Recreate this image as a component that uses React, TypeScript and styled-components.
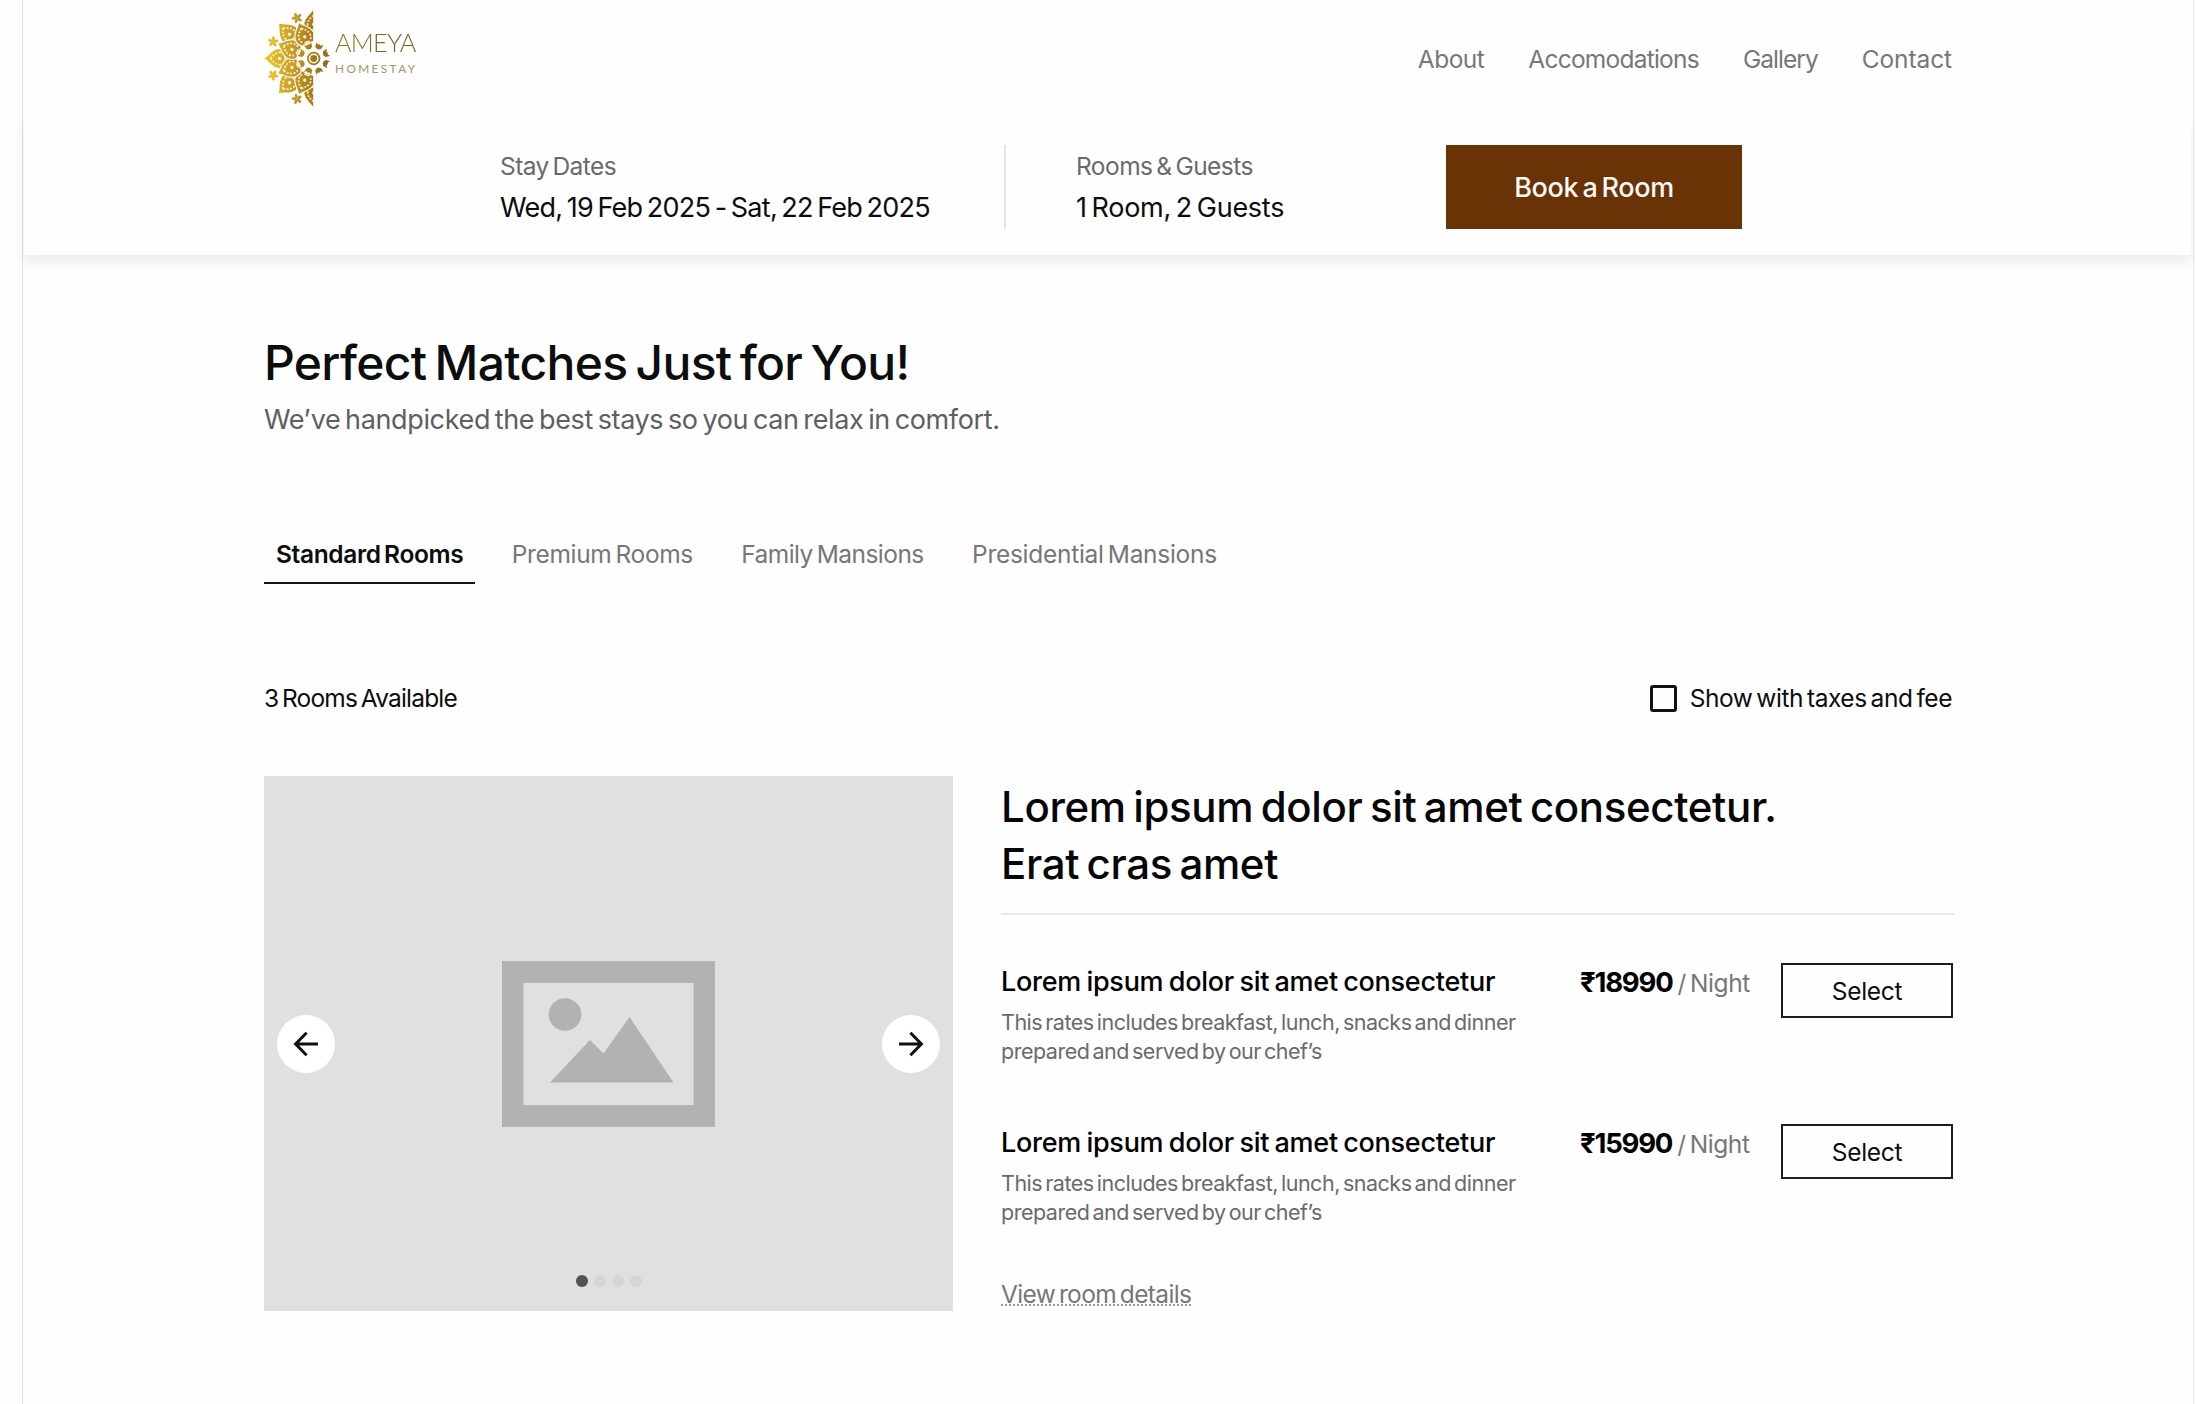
import React, { useState } from "react";
import styled, { createGlobalStyle, css } from "styled-components";

const GlobalStyle = createGlobalStyle`
  *, *::before, *::after { box-sizing: border-box; }
  html, body { margin: 0; padding: 0; background: #fefefe; }
  body { overflow: hidden; }
  button { font: inherit; color: inherit; padding: 0; border: 0; border-radius: 0; background: none; cursor: pointer; }
  h1, h2, h3, p { margin: 0; font-weight: inherit; }
`;

type Tracked = { $track?: number };

const tracking = css<Tracked>`
  letter-spacing: ${({ $track = -0.4 }) => $track}px;
  word-spacing: -2.5px;
  white-space: nowrap;
`;

const bodyText = css<Tracked>`
  font-size: 24.5px;
  line-height: 34px;
  ${tracking}
`;

const Page = styled.div`
  height: 1404px;
  padding: 0 2px 0 22px;
  overflow: hidden;
  background: #fefefe;
  color: #0c0d0d;
  font-family: Inter, "Liberation Sans", sans-serif;
`;

const Frame = styled.div`
  height: 100%;
  border: 1px solid #dfdfdf;
  border-right-color: #ebebeb;
  border-width: 0 1px;
`;

const TopBar = styled.header`
  position: relative;
  z-index: 1;
  display: flex;
  align-items: center;
  justify-content: space-between;
  height: 118px;
  padding: 0 241px;
  background: #fefefe;
`;

const Brand = styled.a`
  display: flex;
  align-items: flex-start;
  height: 118px;
`;

const BrandMark = styled.svg`
  display: block;
  width: 71px;
  height: 118px;
`;

const BrandText = styled.span`
  display: flex;
  flex-direction: column;
  padding-top: 27px;
  font-family: Lato, "Liberation Sans", sans-serif;
`;

const BrandName = styled.span`
  font-size: 25.3px;
  font-weight: 300;
  line-height: 30px;
  letter-spacing: -0.75px;
  background: linear-gradient(90deg, #8d7420, #6f5c22);
  background-clip: text;
  color: transparent;
`;

const BrandTag = styled.span`
  margin-top: 2px;
  font-size: 11.8px;
  line-height: 20px;
  letter-spacing: 2.4px;
  color: #a4965f;
`;

const Nav = styled.nav`
  display: flex;
  gap: 44px;
`;

const NavLink = styled.a<Tracked>`
  ${bodyText}
  color: #777;
`;

const BookingBar = styled.section`
  display: flex;
  height: 137px;
  margin: 0 2px 0 1px;
  padding: 27px 0 26px 476px;
  box-shadow: 0 7px 12px rgba(0, 0, 0, 0.075);
`;

const BookingField = styled.div<{ $width: number }>`
  display: flex;
  flex-direction: column;
  gap: 8px;
  width: ${({ $width }) => $width}px;
  padding-top: 4px;
`;

const FieldLabel = styled.span<Tracked>`
  ${bodyText}
  color: #6a6a6a;
`;

const FieldValue = styled.span<Tracked>`
  ${bodyText}
  font-size: 27px;
`;

const Divider = styled.span`
  width: 2px;
  margin-right: 70px;
  background: #e4e4e4;
`;

const BookButton = styled.button`
  ${tracking}
  width: 296px;
  height: 84px;
  font-size: 27px;
  font-weight: 500;
  color: #fdfaf8;
  background: #693306;
`;

const Content = styled.main`
  width: 1690px;
  margin: 78px 0 0 241px;
`;

const Heading = styled.h1`
  font-size: 48px;
  font-weight: 500;
  line-height: 60px;
  letter-spacing: -0.7px;
  word-spacing: -3.8px;
`;

const Subtitle = styled.p<Tracked>`
  ${tracking}
  margin-top: 9px;
  font-size: 27px;
  line-height: 36px;
  color: #5f5f5f;
`;

const Tabs = styled.div`
  display: flex;
  gap: 24.3px;
  margin-top: 98.5px;
`;

const Tab = styled.button<Tracked & { $active: boolean }>`
  ${bodyText}
  padding: 0 12px 11px;
  border-bottom: 2px solid ${({ $active }) => ($active ? "#161616" : "transparent")};
  font-weight: ${({ $active }) => ($active ? 600 : 400)};
  color: ${({ $active }) => ($active ? "#0c0d0d" : "#777")};
`;

const StatusRow = styled.div`
  display: flex;
  justify-content: space-between;
  margin-top: 97.5px;
  padding-right: 2px;
`;

const RoomCount = styled.span<Tracked>`
  ${bodyText}
`;

const TaxToggle = styled.label<Tracked>`
  ${bodyText}
  display: flex;
  align-items: center;
  gap: 13px;
  cursor: pointer;
`;

const CheckBox = styled.input`
  appearance: none;
  width: 27px;
  height: 27px;
  margin: 0;
  border: 3px solid #111;
  border-radius: 3px;
  &:checked { background: #111; }
`;

const RoomCard = styled.article`
  display: flex;
  gap: 48px;
  margin-top: 61px;
`;

const Gallery = styled.div`
  display: grid;
  grid-template: 1fr / 1fr;
  flex: none;
  width: 689px;
  height: 535px;
  background: #e0e0e0;
`;

const Placeholder = styled.svg`
  grid-area: 1 / 1;
  place-self: center;
  width: 213px;
  height: 166px;
`;

const Arrows = styled.div`
  grid-area: 1 / 1;
  display: flex;
  align-items: center;
  justify-content: space-between;
  padding: 1px 13px 0;
`;

const ArrowButton = styled.button`
  display: grid;
  place-items: center;
  width: 58px;
  height: 58px;
  border-radius: 50%;
  background: #fff;
`;

const Dots = styled.div`
  grid-area: 1 / 1;
  place-self: end center;
  display: flex;
  gap: 6px;
  margin: 0 0 24px 1px;
`;

const Dot = styled.span<{ $active: boolean }>`
  width: 12px;
  height: 12px;
  border-radius: 50%;
  background: ${({ $active }) => ($active ? "#535353" : "#d6d6d6")};
`;

const Details = styled.div`
  flex: 1;
  padding-top: 2px;
`;

const RoomTitle = styled.h2`
  padding-bottom: 21px;
  border-bottom: 2px solid #e9e9e9;
  font-size: 42px;
  font-weight: 500;
  line-height: 57px;
  letter-spacing: -0.35px;
  word-spacing: -3.4px;
  color: #060606;
`;

const Rates = styled.div`
  display: flex;
  flex-direction: column;
  gap: 59px;
  margin-top: 48px;
`;

const Rate = styled.div`
  display: grid;
  grid-template-columns: 579px 201px 172px;
  align-items: start;
`;

const RateTitle = styled.h3`
  padding-top: 2px;
  font-size: 27px;
  font-weight: 500;
  line-height: 34px;
  letter-spacing: -0.27px;
  word-spacing: -1.5px;
  color: #000;
`;

const RateText = styled.p<Tracked>`
  ${tracking}
  width: 545px;
  margin-top: 9px;
  font-size: 21.5px;
  line-height: 28.6px;
  white-space: normal;
  color: #6a6a6a;
`;

const Price = styled.div`
  display: flex;
  align-items: baseline;
  gap: 5px;
  padding-top: 2px;
`;

const Amount = styled.span`
  font-size: 27.5px;
  font-weight: 700;
  line-height: 34px;
  letter-spacing: -1.2px;
  color: #000;
`;

const Unit = styled.span<Tracked>`
  ${bodyText}
  color: #777;
`;

const SelectButton = styled.button<Tracked>`
  ${bodyText}
  height: 55px;
  border: 2px solid #1d1d1d;
`;

const DetailsLink = styled.a<Tracked>`
  ${tracking}
  display: inline-block;
  margin-top: 58px;
  border-bottom: 2px dotted #999;
  font-size: 24.5px;
  line-height: 20px;
  color: #777;
`;

const PETAL = "M49.5 0C44-2 42-9 34-9.8C28-9.8 24-6 25 0C24 6 28 9.8 34 9.8C42 9 44 2 49.5 0Z";
const PETAL_RIM = "M42.5 0C39.5-3 38-5.4 34-5.9C31-6 29.5-5 28.5-3.4M42.5 0C39.5 3 38 5.4 34 5.9C31 6 29.5 5 28.5 3.4";

/* White keeps the gold fill, black cuts a hole in it. */
const Petal = ({ angle, shift = 0 }: { angle: number; shift?: number }) => (
  <g transform={`rotate(${angle}) translate(${-shift} 0)`}>
    <path d={PETAL} fill="#fff" stroke="#000" strokeWidth="1.1" />
    <path d={PETAL_RIM} fill="none" stroke="#000" strokeOpacity="0.85" strokeWidth="1.7" strokeDasharray="1.9 1.5" />
    <circle cx="33.5" cy="0" r="1.7" fill="#000" fillOpacity="0.85" />
    <path d="M28-2.6v5.2" stroke="#000" strokeOpacity="0.85" strokeWidth="1.4" />
  </g>
);

const Blossom = ({ angle }: { angle: number }) => (
  <g transform={`rotate(${angle}) translate(43 0)`} fill="#fff">
    {[0, 72, 144, 216, 288].map((a) => (
      <ellipse key={a} cx="2.8" cy="0" rx="2.5" ry="1.4" transform={`rotate(${a})`} />
    ))}
  </g>
);

const Logo = () => (
  <BrandMark viewBox="0 0 71 118" aria-hidden>
    <defs>
      <linearGradient id="gold" gradientUnits="userSpaceOnUse" x1="-49" y1="0" x2="16" y2="0">
        <stop offset="0" stopColor="#f2c81c" />
        <stop offset="0.4" stopColor="#cda024" />
        <stop offset="0.75" stopColor="#a67814" />
        <stop offset="1" stopColor="#8f6a1c" />
      </linearGradient>
      <clipPath id="half">
        <rect x="-52" y="-52" width="51.5" height="104" />
      </clipPath>
      <mask id="mandala" maskUnits="userSpaceOnUse" x="-52" y="-52" width="74" height="104">
        <g clipPath="url(#half)">
          {[90, 135, 180, 225, 270].map((a) => (
            <Petal key={a} angle={a} />
          ))}
          {[112.5, 157.5, 202.5, 247.5].map((a) => (
            <Petal key={a} angle={a} shift={10.5} />
          ))}
          {[112.5, 157.5, 202.5, 247.5].map((a) => (
            <Blossom key={a} angle={a} />
          ))}
        </g>
        <circle r="16.8" fill="#000" />
        {[22.5, 67.5, 112.5, 157.5, 202.5, 247.5, 292.5, 337.5].map((a) => (
          <path
            key={a}
            transform={`rotate(${a})`}
            d="M10-.9L11.2-3L15.8-3.8L14.2-1.4L15 0L14.2 1.4L15.8 3.8L11.2 3L10 .9Z"
            fill="#fff"
          />
        ))}
        <circle r="5.7" fill="none" stroke="#fff" strokeWidth="1.7" />
        <circle r="3.4" fill="#fff" />
      </mask>
    </defs>
    <g transform="translate(49.7 58.5) scale(1.02)">
      <rect x="-52" y="-52" width="74" height="104" fill="url(#gold)" mask="url(#mandala)" />
    </g>
  </BrandMark>
);

const NAV = [
  { label: "About", track: -0.52 },
  { label: "Accomodations", track: -0.76 },
  { label: "Gallery", track: -0.97 },
  { label: "Contact", track: -0.1 },
];

const TABS = [
  { label: "Standard Rooms", track: -0.35 },
  { label: "Premium Rooms", track: -0.34 },
  { label: "Family Mansions", track: -0.54 },
  { label: "Presidential Mansions", track: -0.28 },
];

const RATES = [{ price: "₹18990" }, { price: "₹15990" }];

const ArrowIcon = ({ flip = false }: { flip?: boolean }) => (
  <svg width="26" height="26" viewBox="-13 -13 26 26" fill="none" stroke="#111" strokeWidth="3">
    <path transform={flip ? "scale(-1 1)" : undefined} d="M12 0H-10M0.6-11.2L-10.4 0L0.6 11.2" />
  </svg>
);

export default function App() {
  const [tab, setTab] = useState(0);
  const [slide, setSlide] = useState(0);

  return (
    <Page>
      <GlobalStyle />
      <Frame>
        <TopBar>
          <Brand>
            <Logo />
            <BrandText>
              <BrandName>AMEYA</BrandName>
              <BrandTag>HOMESTAY</BrandTag>
            </BrandText>
          </Brand>
          <Nav>
            {NAV.map((n) => (
              <NavLink key={n.label} $track={n.track}>
                {n.label}
              </NavLink>
            ))}
          </Nav>
        </TopBar>
        <BookingBar>
          <BookingField $width={504}>
            <FieldLabel $track={-0.58}>Stay Dates</FieldLabel>
            <FieldValue $track={-0.72}>Wed, 19 Feb 2025 - Sat, 22 Feb 2025</FieldValue>
          </BookingField>
          <Divider />
          <BookingField $width={370}>
            <FieldLabel $track={-0.54}>Rooms &amp; Guests</FieldLabel>
            <FieldValue $track={-0.27}>1 Room, 2 Guests</FieldValue>
          </BookingField>
          <BookButton>Book a Room</BookButton>
        </BookingBar>
        <Content>
          <Heading>Perfect Matches Just for You!</Heading>
          <Subtitle $track={-0.36}>We’ve handpicked the best stays so you can relax in comfort.</Subtitle>
          <Tabs>
            {TABS.map((t, i) => (
              <Tab key={t.label} $track={t.track} $active={i === tab} onClick={() => setTab(i)}>
                {t.label}
              </Tab>
            ))}
          </Tabs>
          <StatusRow>
            <RoomCount $track={-0.8}>3 Rooms Available</RoomCount>
            <TaxToggle $track={-0.45}>
              <CheckBox type="checkbox" />
              Show with taxes and fee
            </TaxToggle>
          </StatusRow>
          <RoomCard>
            <Gallery>
              <Placeholder viewBox="0 0 213 166">
                <path fill="#b2b2b2" fillRule="evenodd" d="M0 0H213V166H0ZM21.5 22V144H191.5V22Z" />
                <circle cx="63" cy="53.5" r="16.3" fill="#b2b2b2" />
                <path fill="#b2b2b2" d="M48 121.5L88 79L101.5 92.5L127.5 56L171.5 121.5Z" />
              </Placeholder>
              <Arrows>
                <ArrowButton aria-label="Previous" onClick={() => setSlide((slide + 3) % 4)}>
                  <ArrowIcon />
                </ArrowButton>
                <ArrowButton aria-label="Next" onClick={() => setSlide((slide + 1) % 4)}>
                  <ArrowIcon flip />
                </ArrowButton>
              </Arrows>
              <Dots>
                {[0, 1, 2, 3].map((i) => (
                  <Dot key={i} $active={i === slide} />
                ))}
              </Dots>
            </Gallery>
            <Details>
              <RoomTitle>
                Lorem ipsum dolor sit amet consectetur.
                <br />
                Erat cras amet
              </RoomTitle>
              <Rates>
                {RATES.map((r) => (
                  <Rate key={r.price}>
                    <div>
                      <RateTitle>Lorem ipsum dolor sit amet consectetur</RateTitle>
                      <RateText $track={-0.49}>
                        This rates includes breakfast, lunch, snacks and dinner prepared and served by our chef’s
                      </RateText>
                    </div>
                    <Price>
                      <Amount>{r.price}</Amount>
                      <Unit $track={-0.4}>/ Night</Unit>
                    </Price>
                    <SelectButton $track={-0.3}>Select</SelectButton>
                  </Rate>
                ))}
              </Rates>
              <DetailsLink $track={-0.64}>View room details</DetailsLink>
            </Details>
          </RoomCard>
        </Content>
      </Frame>
    </Page>
  );
}
